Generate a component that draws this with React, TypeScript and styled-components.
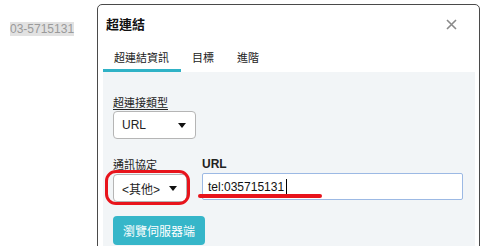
import React from "react";
import styled, { createGlobalStyle } from "styled-components";

const Global = createGlobalStyle`
  html, body { margin: 0; padding: 0; background: #ffffff; overflow: hidden; }
  body { font-family: Arial, "Liberation Sans", "Noto Sans CJK TC", sans-serif; }
`;

const Page = styled.div`
  display: flex;
  align-items: flex-start;
  width: 483px;
  height: 246px;
  overflow: hidden;
`;

const Phone = styled.div`
  padding: 19px 0 0 10px;
  width: 97px;
  flex-shrink: 0;
  box-sizing: border-box;
`;

const PhoneText = styled.span`
  background: #e2e2e2;
  color: #9a9a9a;
  font-family: "Liberation Sans", Arial, sans-serif;
  font-size: 12px;
  line-height: 14px;
  display: inline-block;
`;

const Dialog = styled.div`
  margin-top: 4px;
  width: 383px;
  flex-shrink: 0;
  height: 260px;
  border: 1px solid #4a4a4a;
  border-radius: 5px;
  box-sizing: border-box;
  display: flex;
  flex-direction: column;
  background: #fff;
`;

const Header = styled.div`
  display: flex;
  align-items: center;
  justify-content: space-between;
  height: 34px;
  padding: 0 22px 0 8px;
`;

const Title = styled.div`
  font-family: "Noto Sans CJK TC", sans-serif;
  font-weight: 700;
  font-size: 13px;
  color: #111;
  padding-top: 2px;
`;

const Close = styled.svg`
  width: 11px;
  height: 11px;
  margin-top: 5px;
`;

const Tabs = styled.div`
  display: flex;
  padding-left: 5px;
  height: 33px;
  align-items: stretch;
`;

const Tab = styled.div<{ $active?: boolean }>`
  font-family: "Noto Sans CJK TC", sans-serif;
  font-size: 11px;
  color: #222;
  padding: 10px 12px 0 11px;
  box-sizing: border-box;
  border-bottom: 3px solid ${(p) => (p.$active ? "#2fb2c6" : "transparent")};
`;

const Panel = styled.div`
  flex: 1;
  margin: 0 4px 0 5px;
  background: #f2f5f7;
  padding: 22px 0 0 10px;
  display: flex;
  flex-direction: column;
`;

const Label = styled.div<{ $underline?: boolean; $bold?: boolean }>`
  font-family: ${(p) =>
    p.$bold ? `Arial, "Liberation Sans", sans-serif` : `"Noto Sans CJK TC", sans-serif`};
  font-weight: ${(p) => (p.$bold ? 700 : 400)};
  font-size: ${(p) => (p.$bold ? 12 : 11)}px;
  line-height: 16px;
  color: #222;
  text-decoration: ${(p) => (p.$underline ? "underline" : "none")};
  text-underline-offset: 2px;
`;

const Select = styled.div<{ $w: number }>`
  position: relative;
  width: ${(p) => p.$w}px;
  height: 28px;
  box-sizing: border-box;
  border: 1px solid #b5b5b5;
  border-radius: 4px;
  background: #fff;
  display: flex;
  align-items: center;
  justify-content: space-between;
  padding: 0 9px 0 8px;
  font-family: "Liberation Sans", Arial, "Noto Sans CJK TC", sans-serif;
  font-size: 12px;
  color: #222;
`;

const Arrow = styled.span`
  width: 0;
  height: 0;
  border-left: 4px solid transparent;
  border-right: 4px solid transparent;
  border-top: 5px solid #111;
`;

const Field = styled.div`
  display: flex;
  flex-direction: column;
  gap: 1px;
`;

const Row = styled.div`
  display: flex;
  gap: 15px;
  margin-top: 17px;
`;

const UrlField = styled(Field)`
  position: relative;
`;

const Input = styled.div`
  width: 261px;
  height: 27px;
  box-sizing: border-box;
  border: 1px solid #9cb9e4;
  border-radius: 2px;
  background: #fff;
  display: flex;
  align-items: center;
  padding-left: 5px;
  font-family: "Liberation Sans", Arial, sans-serif;
  font-size: 12px;
  color: #111;
`;

const Caret = styled.span`
  display: inline-block;
  width: 1px;
  height: 16px;
  background: #000;
  margin-left: 2px;
`;

const SelectWrap = styled.div`
  position: relative;
  margin-top: 1px;
`;

const Circle = styled.div`
  position: absolute;
  left: -8px;
  top: -4px;
  width: 85px;
  height: 35px;
  border: 3px solid #e8141c;
  border-radius: 11px;
  box-sizing: border-box;
  pointer-events: none;
`;

const Underline = styled.div`
  position: absolute;
  left: -4px;
  top: 38px;
  width: 124px;
  height: 4px;
  border-radius: 2px;
  background: #e8141c;
`;

const Button = styled.div`
  margin-top: 14px;
  width: 92px;
  height: 29px;
  border-radius: 4px;
  background: #36b6c9;
  color: #fff;
  display: flex;
  align-items: center;
  justify-content: center;
  font-family: "Noto Sans CJK TC", sans-serif;
  font-size: 12px;
`;

export default function App() {
  return (
    <>
      <Global />
      <Page>
        <Phone>
          <PhoneText>03-5715131</PhoneText>
        </Phone>
        <Dialog>
          <Header>
            <Title>超連結</Title>
            <Close viewBox="0 0 11 11">
              <path d="M1 1 L10 10 M10 1 L1 10" stroke="#8a8a8a" strokeWidth="1.6" fill="none" />
            </Close>
          </Header>
          <Tabs>
            <Tab $active>超連結資訊</Tab>
            <Tab>目標</Tab>
            <Tab>進階</Tab>
          </Tabs>
          <Panel>
            <Field>
              <Label $underline>超連接類型</Label>
              <Select $w={83}>
                URL
                <Arrow />
              </Select>
            </Field>
            <Row>
              <Field>
                <Label>通訊協定</Label>
                <SelectWrap>
                  <Select $w={74}>
                    &lt;其他&gt;
                    <Arrow />
                  </Select>
                  <Circle />
                </SelectWrap>
              </Field>
              <UrlField>
                <Label $bold>URL</Label>
                <Input>
                  tel:035715131
                  <Caret />
                </Input>
                <Underline />
              </UrlField>
            </Row>
            <Button>瀏覽伺服器端</Button>
          </Panel>
        </Dialog>
      </Page>
    </>
  );
}
